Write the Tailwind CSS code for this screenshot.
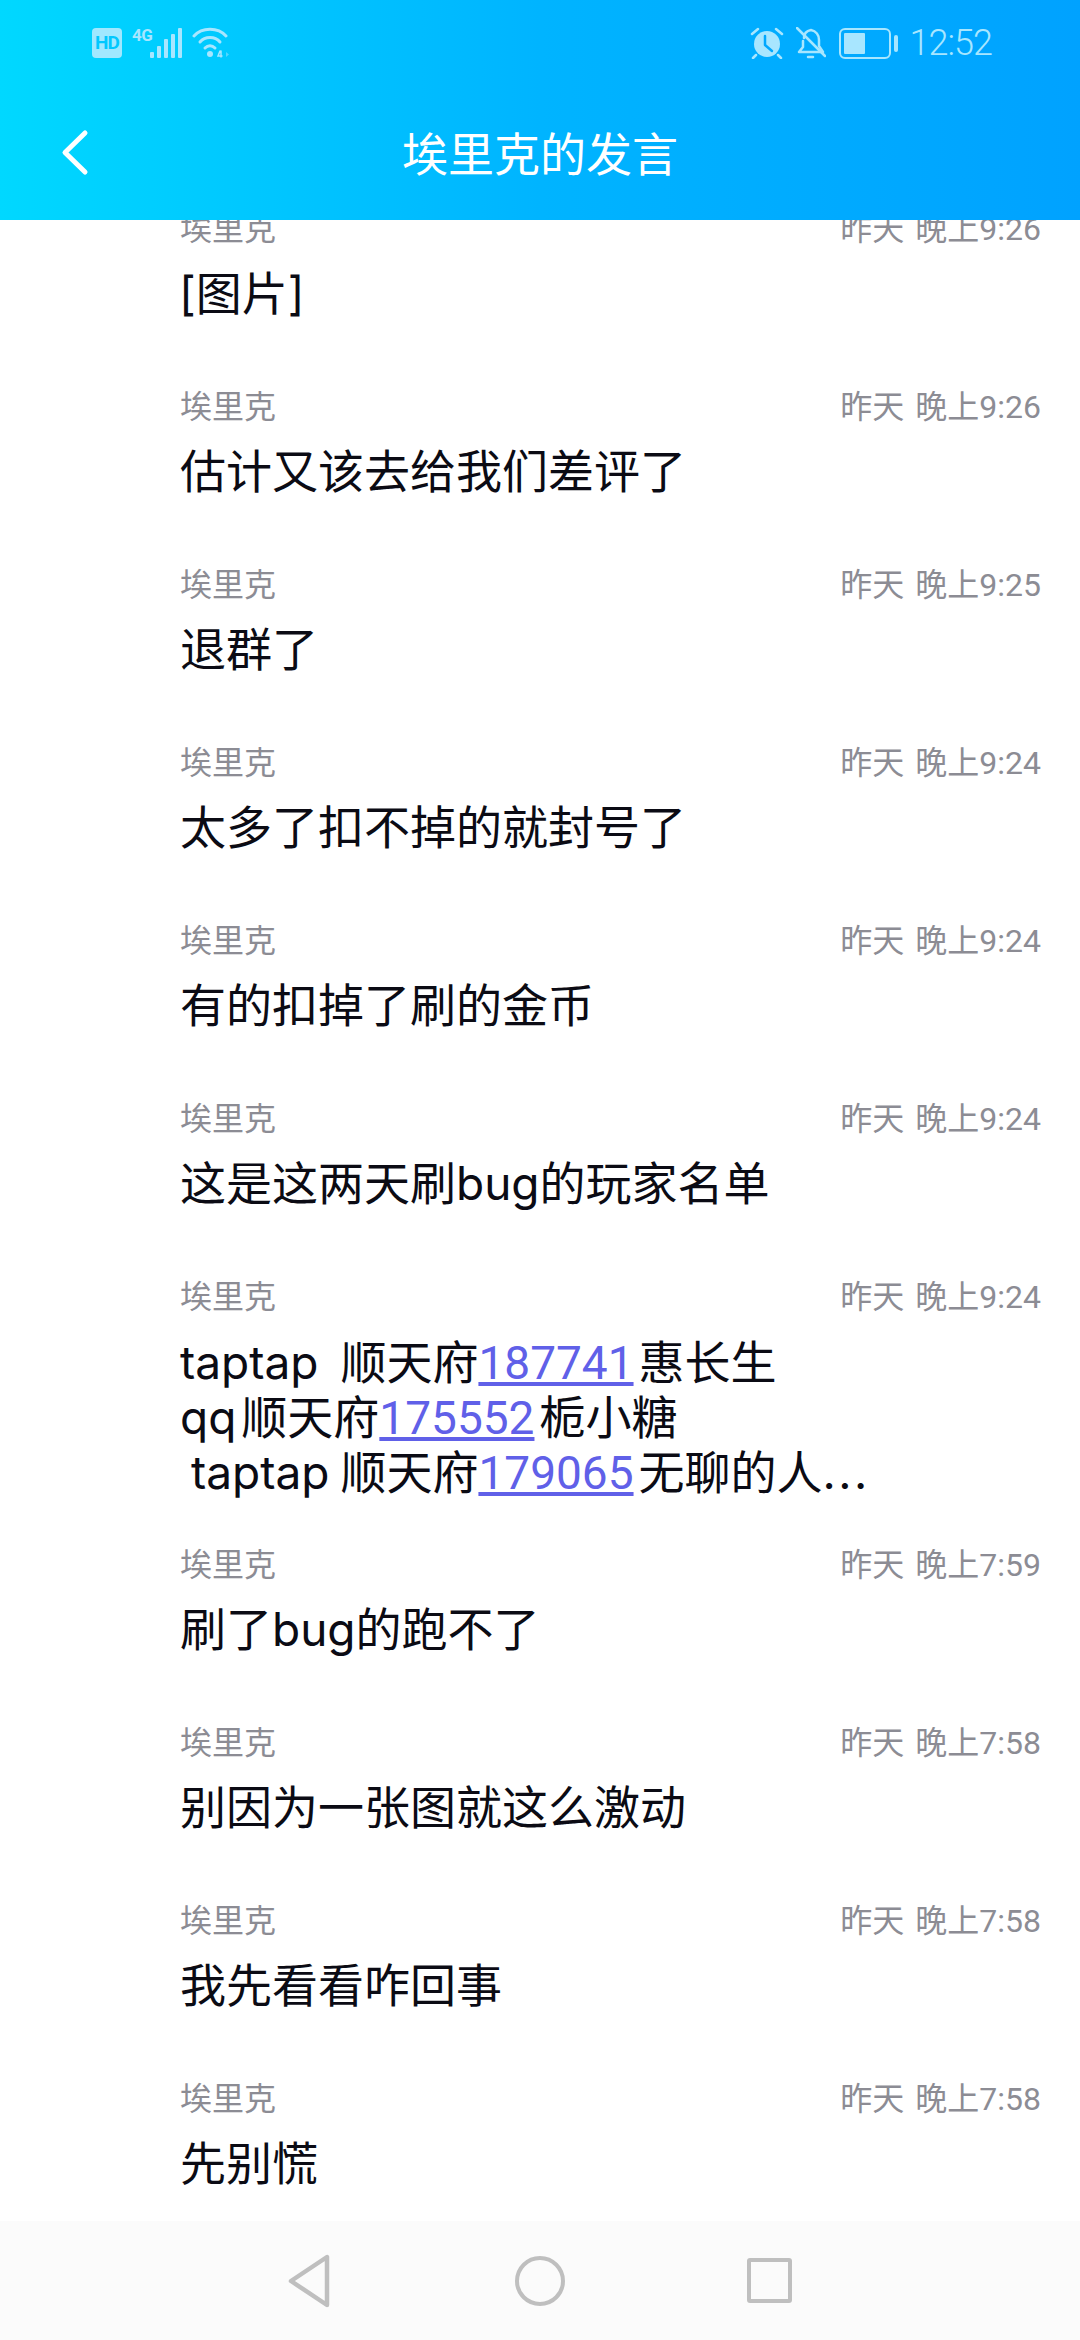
<!DOCTYPE html>
<html lang="zh-CN">

<head>
    <meta charset="UTF-8" />
    <meta name="viewport" content="width=device-width, initial-scale=1.0">
    <title>埃里克的发言</title>
    <script src="https://cdn.jsdelivr.net/npm/@tailwindcss/browser@4"></script>
</head>

<body class="bg-white font-['Inter','Noto_Sans_CJK_SC',sans-serif]">
    <div class="flex flex-col w-[1080px] h-[2340px] overflow-hidden">

        <!-- Header -->
        <header class="relative z-10 h-[220px] shrink-0 bg-linear-to-r from-[#00d8ff] via-[#00b4ff] to-[#00a2ff] text-white">
            <!-- Status bar -->
            <div class="flex items-center justify-between h-[86px] pl-[92px] pr-[88px] text-[#a8e6ff]">
                <div class="flex items-center">
                    <span class="flex items-center justify-center w-[30px] h-[30px] rounded-[4px] bg-[#a0e8ff] text-[#00c8ff] text-[19px] font-bold font-['Roboto',sans-serif] tracking-[-1px]">HD</span>
                    <div class="relative w-[50px] h-[30px] ml-[10px]">
                        <span class="absolute left-0 top-[-3px] text-[17px] leading-[20px] font-bold font-['Roboto',sans-serif] tracking-[-0.5px]">4G</span>
                        <svg class="absolute left-[18px] top-0" width="32" height="30" viewBox="0 0 32 30" fill="currentColor">
                            <rect x="0" y="24" width="4" height="6" rx="1" />
                            <rect x="7" y="18" width="4" height="12" rx="1" />
                            <rect x="14" y="11" width="4" height="19" rx="1" />
                            <rect x="21" y="6" width="4" height="24" rx="1" />
                            <rect x="28" y="0" width="4" height="30" rx="1" />
                        </svg>
                    </div>
                    <svg class="ml-[10px]" width="38" height="32" viewBox="0 0 38 32" fill="none" stroke="currentColor" stroke-width="3" stroke-linecap="round">
                        <path d="M2 9 C10 0 26 0 34 9" />
                        <path d="M8 15 C13 9 23 9 28 15" />
                        <path d="M13 21 C16 18 20 18 23 21" />
                        <circle cx="18" cy="27" r="3" fill="currentColor" stroke="none" />
                        <path d="M28 24 L26 29 H30 M29 24 V30" stroke-width="1.5" />
                        <path d="M34 25 L37 27.5 L34 30 Z" fill="currentColor" stroke="none" opacity="0.5" />
                    </svg>
                </div>
                <div class="flex items-center">
                    <svg width="34" height="32" viewBox="0 0 34 32" fill="currentColor">
                        <circle cx="17" cy="17" r="13" />
                        <path d="M15 9 V18 L22 24" fill="none" stroke="#00a8ff" stroke-width="2.5" stroke-linecap="round" stroke-linejoin="round" />
                        <path d="M2 7 L8 2 M32 7 L26 2 M6 28 L3 31 M28 28 L31 31" fill="none" stroke="currentColor" stroke-width="2.5" stroke-linecap="round" />
                    </svg>
                    <svg class="ml-[12px]" width="30" height="32" viewBox="0 0 30 32" fill="none" stroke="currentColor" stroke-width="2.5" stroke-linecap="round" stroke-linejoin="round">
                        <path d="M8 11 C8 7 10 4 15 3 C20 4 23 8 23 13 V19 L27 25 H3 L7 20 V14" />
                        <path d="M1 1 L29 29" />
                        <path d="M12 30 H17" />
                    </svg>
                    <div class="flex items-center ml-[13px]">
                        <div class="flex items-center w-[52px] h-[31px] rounded-[6px] border-[2.5px] border-[#a8e6ff] p-[3px]">
                            <div class="w-[21px] h-full rounded-[1px] bg-[#a8e6ff]"></div>
                        </div>
                        <div class="w-[4px] h-[17px] ml-[3px] rounded-full bg-[#a8e6ff]"></div>
                    </div>
                    <span class="ml-[12px] text-[36px] leading-[40px] font-light font-['Roboto',sans-serif] tracking-[-1px]">12:52</span>
                </div>
            </div>
            <!-- Title row -->
            <div class="relative flex items-center justify-center h-[134px] pt-[2px]">
                <svg class="absolute left-[60px] top-[43px]" width="30" height="50" viewBox="0 0 30 50" fill="none" stroke="white" stroke-width="5" stroke-linecap="round" stroke-linejoin="round">
                    <path d="M25 4 L5 23.5 L25 43" />
                </svg>
                <h1 class="text-[46px] leading-[60px] font-normal">埃里克的发言</h1>
            </div>
        </header>

        <!-- Messages -->
        <main class="flex-1 min-h-0 overflow-hidden pl-[180px] pr-[39px] text-[46px] leading-[55px] text-[#0b0b14]">
            <div class="mt-[-11px] h-[178px]">
                <div class="flex justify-between text-[32px] leading-[40px] text-[#8c8c94] font-['Roboto','Noto_Sans_CJK_SC',sans-serif]"><span>埃里克</span><span class="[word-spacing:3px]">昨天 晚上9:26</span></div>
                <p class="mt-[17px] -ml-[1px]">[图片]</p>
            </div>
            <div class="h-[178px]">
                <div class="flex justify-between text-[32px] leading-[40px] text-[#8c8c94] font-['Roboto','Noto_Sans_CJK_SC',sans-serif]"><span>埃里克</span><span class="[word-spacing:3px]">昨天 晚上9:26</span></div>
                <p class="mt-[17px]">估计又该去给我们差评了</p>
            </div>
            <div class="h-[178px]">
                <div class="flex justify-between text-[32px] leading-[40px] text-[#8c8c94] font-['Roboto','Noto_Sans_CJK_SC',sans-serif]"><span>埃里克</span><span class="[word-spacing:3px]">昨天 晚上9:25</span></div>
                <p class="mt-[17px]">退群了</p>
            </div>
            <div class="h-[178px]">
                <div class="flex justify-between text-[32px] leading-[40px] text-[#8c8c94] font-['Roboto','Noto_Sans_CJK_SC',sans-serif]"><span>埃里克</span><span class="[word-spacing:3px]">昨天 晚上9:24</span></div>
                <p class="mt-[17px]">太多了扣不掉的就封号了</p>
            </div>
            <div class="h-[178px]">
                <div class="flex justify-between text-[32px] leading-[40px] text-[#8c8c94] font-['Roboto','Noto_Sans_CJK_SC',sans-serif]"><span>埃里克</span><span class="[word-spacing:3px]">昨天 晚上9:24</span></div>
                <p class="mt-[17px]">有的扣掉了刷的金币</p>
            </div>
            <div class="h-[178px]">
                <div class="flex justify-between text-[32px] leading-[40px] text-[#8c8c94] font-['Roboto','Noto_Sans_CJK_SC',sans-serif]"><span>埃里克</span><span class="[word-spacing:3px]">昨天 晚上9:24</span></div>
                <p class="mt-[17px]">这是这两天刷bug的玩家名单</p>
            </div>
            <div class="h-[268px]">
                <div class="flex justify-between text-[32px] leading-[40px] text-[#8c8c94] font-['Roboto','Noto_Sans_CJK_SC',sans-serif]"><span>埃里克</span><span class="[word-spacing:3px]">昨天 晚上9:24</span></div>
                <p class="mt-[18px] leading-[54px] whitespace-pre [word-spacing:-2px]">taptap  顺天府<a class="mr-[5px] text-[#6060e8] underline font-['Roboto',sans-serif]">187741</a>惠长生
<span class="mr-[5px]">qq</span>顺天府<a class="mr-[5px] text-[#6060e8] underline font-['Roboto',sans-serif]">175552</a>栀小糖
 taptap 顺天府<a class="mr-[5px] text-[#6060e8] underline font-['Roboto',sans-serif]">179065</a>无聊的人<span class="tracking-[2.5px]">...</span></p>
            </div>
            <div class="h-[178px]">
                <div class="flex justify-between text-[32px] leading-[40px] text-[#8c8c94] font-['Roboto','Noto_Sans_CJK_SC',sans-serif]"><span>埃里克</span><span class="[word-spacing:3px]">昨天 晚上7:59</span></div>
                <p class="mt-[17px]">刷了bug的跑不了</p>
            </div>
            <div class="h-[178px]">
                <div class="flex justify-between text-[32px] leading-[40px] text-[#8c8c94] font-['Roboto','Noto_Sans_CJK_SC',sans-serif]"><span>埃里克</span><span class="[word-spacing:3px]">昨天 晚上7:58</span></div>
                <p class="mt-[17px]">别因为一张图就这么激动</p>
            </div>
            <div class="h-[178px]">
                <div class="flex justify-between text-[32px] leading-[40px] text-[#8c8c94] font-['Roboto','Noto_Sans_CJK_SC',sans-serif]"><span>埃里克</span><span class="[word-spacing:3px]">昨天 晚上7:58</span></div>
                <p class="mt-[17px]">我先看看咋回事</p>
            </div>
            <div class="h-[178px]">
                <div class="flex justify-between text-[32px] leading-[40px] text-[#8c8c94] font-['Roboto','Noto_Sans_CJK_SC',sans-serif]"><span>埃里克</span><span class="[word-spacing:3px]">昨天 晚上7:58</span></div>
                <p class="mt-[17px]">先别慌</p>
            </div>
        </main>

        <!-- Navigation bar -->
        <nav class="flex items-center h-[119px] shrink-0 bg-[#fbfbfb] pl-[285px]">
            <svg width="48" height="54" viewBox="0 0 48 54" fill="none" stroke="#bfbfbf" stroke-width="4.5" stroke-linejoin="round">
                <path d="M42 3 V51 L6 27 Z" />
            </svg>
            <div class="w-[50px] h-[50px] ml-[182px] rounded-full border-[4.5px] border-[#bfbfbf]"></div>
            <div class="w-[45px] h-[45px] ml-[182px] rounded-[3px] border-[4.5px] border-[#bfbfbf]"></div>
        </nav>
    </div>
</body>

</html>
